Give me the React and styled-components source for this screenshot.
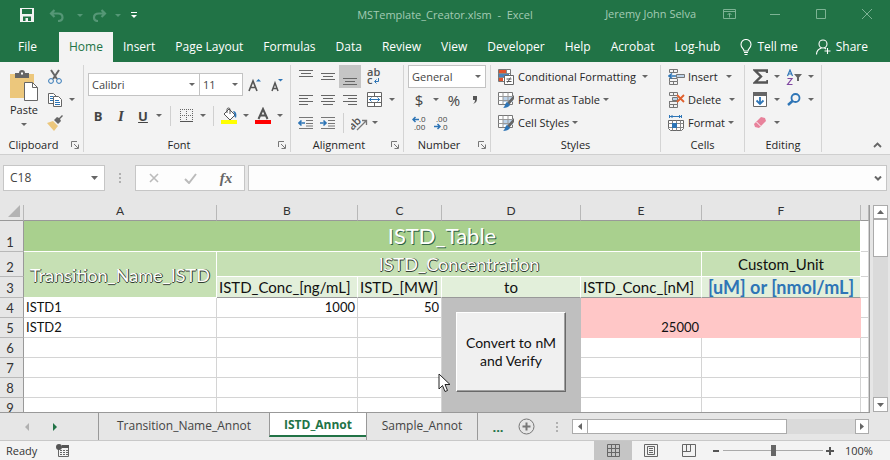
import React from "react";
import styled, { createGlobalStyle } from "styled-components";

const GlobalStyle = createGlobalStyle`
  * { box-sizing: border-box; }
  body { margin: 0; }
  button, input, select { font: inherit; color: inherit; margin: 0; }
`;

const UI = `"Open Sans", "Noto Sans", sans-serif`;
const CELL = `Lato, "Open Sans", sans-serif`;

const Window = styled.div`
  display: flex;
  flex-direction: column;
  height: 100vh;
  overflow: hidden;
  background: #e6e6e6;
  color: #262626;
  font-family: ${UI};
  font-size: 12px;
  line-height: 16px;
`;

/* ---------- shared ---------- */
const PlainButton = styled.button`
  display: inline-flex;
  align-items: center;
  justify-content: center;
  flex: none;
  width: ${(p) => (p.$w ? `${p.$w}px` : "auto")};
  height: ${(p) => (p.$h ? `${p.$h}px` : "auto")};
  padding: 0;
  border: 0;
  background: ${(p) => (p.$pressed ? "#c5c5c5" : "transparent")};
  white-space: nowrap;
`;

function Svg({ w = 16, h = 16, children, ...rest }) {
  return (
    <svg width={w} height={h} viewBox={`0 0 ${w} ${h}`} fill="none" aria-hidden="true" {...rest}>
      {children}
    </svg>
  );
}

const Caret = ({ color = "#666" }) => (
  <Svg w={6} h={3}><path d="M0 0h6L3 3z" fill={color} /></Svg>
);

function CaretButton({ label, w = 12, color }) {
  return <PlainButton $w={w} $h={20} aria-label={label}><Caret color={color} /></PlainButton>;
}

/* ---------- title bar ---------- */
const TitleBar = styled.header`
  display: grid;
  grid-template-columns: 1fr auto 1fr;
  align-items: center;
  flex: none;
  height: 32px;
  padding-bottom: 4px;
  background: #217346;
  color: #a3cbb4;
  font-size: 11px;
`;
const QuickAccess = styled.div`
  display: flex;
  align-items: center;
  padding: 2px 0 0 19px;
`;
const DocTitle = styled.h1`
  margin: 2px 0 0;
  font-size: 11px;
  font-weight: 400;
  white-space: pre;
`;
const WindowControls = styled.div`
  display: flex;
  align-items: center;
  justify-content: flex-end;
  min-width: 0;
`;
const UserName = styled.span`
  margin-right: 10px;
  white-space: nowrap;
`;

/* ---------- ribbon tabs ---------- */
const RibbonTabs = styled.nav`
  display: flex;
  flex: none;
  height: 30px;
  padding-right: 22px;
  background: #217346;
  color: #fff;
`;
const RibbonTab = styled.button`
  flex: none;
  height: 30px;
  padding: 0 10px;
  border: 0;
  background: ${(p) => (p.$active ? "#f3f3f3" : "transparent")};
  color: ${(p) => (p.$active ? "#217346" : "#fff")};
  font-size: 12px;
  white-space: nowrap;
  &:first-child { padding: 0 22px 0 18px; }
`;
const TabAction = styled.button`
  display: flex;
  align-items: center;
  gap: 5px;
  padding: 0;
  border: 0;
  margin-left: ${(p) => (p.$end ? "auto" : "10px")};
  background: transparent;
  color: #fff;
  white-space: nowrap;
`;

/* ---------- ribbon ---------- */
const Ribbon = styled.section`
  display: flex;
  flex: none;
  height: 93px;
  padding: 3px 0 2px;
  border-bottom: 1px solid #cfcfcf;
  background: #f3f3f3;
  font-size: 11px;
`;
const Group = styled.div`
  display: flex;
  flex-direction: column;
  flex: none;
  width: ${(p) => p.$w}px;
  padding: 0 4px;
  border-right: 1px solid #d4d4d4;
`;
const GroupBody = styled.div`
  display: flex;
  flex-direction: ${(p) => (p.$row ? "row" : "column")};
  flex: 1;
  min-height: 0;
  ${(p) => p.$spread && "padding: 8px 0 11px; justify-content: space-between;"}
`;
const GroupFooter = styled.div`
  display: flex;
  align-items: center;
  height: 14px;
  white-space: nowrap;
`;
const FooterLabel = styled.span`
  flex: 1;
  text-align: center;
`;
const Launcher = styled(PlainButton)`
  margin-left: 8px;
`;
const Line = styled.div`
  display: flex;
  align-items: center;
  height: 23px;
  flex: none;
`;
const Stack = styled.div`
  display: flex;
  flex-direction: column;
`;
const VRule = styled.span`
  flex: none;
  width: 1px;
  height: 20px;
  margin: 0 ${(p) => p.$m ?? 5}px;
  background: #d0d0d0;
`;
const PasteButton = styled.button`
  display: flex;
  flex-direction: column;
  align-items: center;
  width: 40px;
  padding: 5px 0 0;
  border: 0;
  background: transparent;
  gap: 1px;
  & > svg:last-child { margin-top: 4px; }
`;
const PickerBox = styled.label`
  position: relative;
  display: flex;
  flex: none;
  width: ${(p) => p.$w}px;
  height: 23px;
  border: 1px solid #c3c3c3;
  background: #fff;
  & + & { border-left: 0; }
  & > svg {
    position: absolute;
    right: 4px;
    top: 9px;
    pointer-events: none;
  }
`;
const Picker = styled.select`
  width: 100%;
  padding: 0 3px;
  border: 0;
  appearance: none;
  background: transparent;
  color: #444;
`;
const GlyphButton = styled(PlainButton)`
  color: #444;
  font-size: ${(p) => p.$size ?? 13}px;
  font-weight: ${(p) => (p.$bold ? 700 : 400)};
  font-style: ${(p) => (p.$italic ? "italic" : "normal")};
  font-family: ${(p) => (p.$italic ? `"Liberation Serif", serif` : UI)};
  text-decoration: ${(p) => (p.$underline ? "underline" : "none")};
`;
const LabelButton = styled.button`
  display: flex;
  align-items: center;
  gap: 3px;
  height: 23px;
  padding: 0 3px;
  border: 0;
  background: transparent;
  white-space: nowrap;
  & > svg:last-child { margin-left: ${(p) => p.$gap ?? 0}px; }
`;
const CollapseSlot = styled.div`
  display: flex;
  flex: 1;
  align-items: flex-end;
  justify-content: flex-end;
  padding: 0 7px 0 0;
`;

function RibbonGroup({ name, w, launcher, children, row, spread }) {
  return (
    <Group $w={w} role="group" aria-label={name}>
      <GroupBody $row={row} $spread={spread}>{children}</GroupBody>
      <GroupFooter>
        <FooterLabel>{name}</FooterLabel>
        {launcher && (
          <Launcher $w={8} $h={10} aria-label={`${name} settings`}>
            <Svg w={8} h={8}>
              <path d="M.5 6V.5H6M3 3l4 4M7.500 3.500v4h-4" stroke="#777" />
            </Svg>
          </Launcher>
        )}
      </GroupFooter>
    </Group>
  );
}

const Lines = ({ rows }) => (
  <Svg w={16} h={16}>
    {rows.map(([x, y, l]) => <path key={y} d={`M${x} ${y}.5h${l}`} stroke="#666" />)}
  </Svg>
);

const IndentIcon = ({ right }) => (
  <Svg>
    <path d="M1 2.500h14M8 5.500h7M8 8.500h7M1 13.500h14M8 11h7" stroke="#777" />
    <path d={right ? "M0 8h6M3.500 5.500L6 8l-2.500 2.500" : "M7 8H1M3.500 5.500L1 8l2.500 2.500"} stroke="#2e75b6" strokeWidth="1.600" />
  </Svg>
);

const TableIcon = ({ children, fill = "#bcd3ea" }) => (
  <Svg w={17}>
    <path d="M.5.5h14v12H.5z" fill="#fff" stroke="#777" />
    <path d="M5 4h10v6H5z" fill={fill} />
    <path d="M.5 4.500h14M.5 8.500h14M5 .5v12M10 .5v12" stroke="#999" />
    {children}
  </Svg>
);

const Brush = () => (
  <>
    <path d="M16 3v4l-5 6-2-2z" fill="#666" />
    <path d="M9 10l3 3c-1 2-4 3-7 3 2-1 2-5 4-6z" fill="#2e75b6" />
  </>
);

const CellsBase = () => (
  <path d="M1.500.5h8v3h-8zM5.500.5v3M1.500 12.500h8v3h-8zM5.500 12.500v3M1.500 9v3.500M9.500 10v2.500M1.500 9.500h8" stroke="#777" />
);

/* ---------- formula bar ---------- */
const FormulaBar = styled.section`
  display: flex;
  align-items: center;
  flex: none;
  height: 50px;
  padding: 0 3px 4px;
  font-size: 12px;
`;
const NameBox = styled.div`
  display: flex;
  align-items: center;
  width: 102px;
  height: 26px;
  border: 1px solid #c6c6c6;
  background: #fff;
`;
const BareInput = styled.input`
  flex: 1;
  min-width: 0;
  padding: 0 6px;
  border: 0;
  background: transparent;
  color: #444;
`;
const Grip = styled.span`
  display: flex;
  justify-content: center;
  width: 30px;
`;
const FormulaActions = styled.div`
  display: flex;
  align-items: center;
  justify-content: space-between;
  width: 110px;
  height: 26px;
  margin-right: 3px;
  padding: 0 11px;
  border: 1px solid #c6c6c6;
  background: #fdfdfd;
`;
const FormulaBox = styled.div`
  display: flex;
  align-items: center;
  flex: 1;
  height: 26px;
  padding-right: 3px;
  border: 1px solid #c6c6c6;
  background: #fdfdfd;
`;
const FxButton = styled(PlainButton)`
  color: #666;
  font: italic 700 15px "Liberation Serif", serif;
`;

/* ---------- sheet ---------- */
const SheetArea = styled.main`
  display: flex;
  flex: 1;
  min-height: 0;
`;
const SheetPane = styled.div`
  position: relative;
  flex: 1;
  min-width: 0;
  overflow: hidden;
  border-right: 1px solid #999;
  border-bottom: 1px solid #999;
  background: #fff;
`;
const Grid = styled.table`
  width: 100%;
  table-layout: fixed;
  border-collapse: separate;
  border-spacing: 0;
  color: #111;
  font-family: ${CELL};
  font-size: 13px;
  line-height: 15px;
`;
const Column = styled.col`
  width: ${(p) => (p.$w ? `${p.$w}px` : "auto")};
`;
const Row = styled.tr`
  height: ${(p) => p.$h ?? 20}px;
`;
const HeadCell = styled.th`
  padding: 0;
  border-right: 1px solid #b8b8b8;
  border-bottom: 1px solid #b8b8b8;
  background: #e6e6e6;
  color: #333;
  font-weight: 400;
  font-size: 13px;
  line-height: 14px;
  vertical-align: bottom;
  ${(p) => p.$row && "border-right-color: #999; padding-right: 3px; padding-bottom: 2px;"}
  ${(p) => p.$col && "border-bottom-color: #999; padding-bottom: 3px; font-size: 12px; line-height: 12px;"}
`;
const Corner = styled(HeadCell)`
  padding: 0;
  & > svg { display: block; margin: 0 3px 3px auto; }
`;
const fills = {
  title: "background: #a9d08e; border-color: #fff;",
  band: "background: #c6e0b4; border-color: #fff;",
  label: "background: #e2efda; border-right-color: #fff; border-bottom-color: #999;",
  pink: "background: #ffc7c7; border-color: #ffc7c7;",
  grey: "background: #bfbfbf; border-color: #bfbfbf;",
  none: "",
};
const Cell = styled.td`
  position: ${(p) => (p.$anchor ? "relative" : "static")};
  padding: 0 2px;
  border-right: 1px solid #d4d4d4;
  border-bottom: 1px solid #d4d4d4;
  text-align: ${(p) => p.$align ?? "left"};
  white-space: nowrap;
  ${(p) => fills[p.$fill ?? "none"]}
`;
const FieldName = styled.span`
  font-size: 15px;
  line-height: 18px;
`;
const SheetTitle = styled.span`
  color: #fff;
  font-size: 22px;
  line-height: 26px;
  text-shadow: 1px 1px 0 #2f5f45;
`;
const BandTitle = styled.span`
  color: #fff;
  font-size: 18px;
  line-height: 20px;
  text-shadow: 1px 0 0 #2f3a2f, 0 1px 0 #2f3a2f;
`;
const UnitNote = styled.strong`
  color: #2e75b6;
  font-size: 18px;
  line-height: 18px;
`;
const MacroButton = styled.button`
  position: absolute;
  z-index: 1;
  left: 14px;
  top: 14px;
  width: 110px;
  height: 80px;
  padding: 0;
  border: 1px solid;
  border-color: #fff #696969 #696969 #fff;
  box-shadow: inset -1px -1px 0 #a0a0a0;
  background: #f0f0f0;
  color: #111;
  font-size: 14px;
  line-height: 18px;
  white-space: normal;
`;
const Pointer = styled.div`
  position: absolute;
  z-index: 2;
  left: 438px;
  top: 168px;
`;
const VScroll = styled.div`
  display: flex;
  flex-direction: column;
  flex: none;
  width: 15px;
  margin: 0 2px 1px 3px;
  background: #dadada;
`;
const ScrollButton = styled(PlainButton)`
  border: 1px solid #ababab;
  background: #fff;
`;
const VThumb = styled.div`
  height: 38px;
  border: 1px solid #ababab;
  background: #fff;
`;
const Spacer = styled.div`
  flex: 1;
`;

/* ---------- sheet tabs ---------- */
const SheetTabs = styled.nav`
  display: flex;
  flex: none;
  height: 27px;
  padding-right: 21px;
  color: #444;
  font-size: 12px;
`;
const TabArrows = styled.div`
  display: flex;
  align-items: center;
  width: 98px;
  padding-left: 13px;
`;
const SheetTab = styled.button`
  flex: none;
  width: ${(p) => p.$w}px;
  height: ${(p) => (p.$active ? 24 : 27)}px;
  padding: ${(p) => (p.$active ? "2px 0 0" : "0 0 1px")};
  border: 0;
  border-left: 1px solid #999;
  border-bottom: ${(p) => (p.$active ? "2px solid #217346" : "0")};
  background: ${(p) => (p.$active ? "#fff" : "transparent")};
  color: ${(p) => (p.$active ? "#217346" : "#444")};
  font-weight: ${(p) => (p.$active ? 700 : 400)};
  white-space: nowrap;
`;
const TabsEnd = styled.div`
  display: flex;
  align-items: center;
  width: 95px;
  flex: none;
  border-left: 1px solid #999;
`;
const MoreTabs = styled(PlainButton)`
  color: #217346;
  font-weight: 700;
  font-size: 13px;
`;
const HScroll = styled.div`
  display: flex;
  flex: 1;
  height: 15px;
  margin-top: 6px;
  background: #dadada;
`;
const HThumb = styled.div`
  width: 67%;
  border: 1px solid #ababab;
  border-left: 0;
  background: #fff;
`;

/* ---------- status bar ---------- */
const StatusBar = styled.footer`
  display: flex;
  align-items: stretch;
  flex: none;
  height: 20px;
  padding: 0 18px 0 6px;
  border-top: 1px solid #c8c8c8;
  background: #f3f3f3;
  color: #333;
  font-size: 11px;
`;
const Status = styled.span`
  align-self: center;
  width: 50px;
`;
const ZoomControl = styled.div`
  display: flex;
  align-items: center;
  margin-left: 4px;
`;
const ZoomSlider = styled.input`
  appearance: none;
  width: 100px;
  height: 11px;
  margin: 0 3px;
  background: linear-gradient(#aaa, #aaa) center / 100% 1px no-repeat;
  &::-webkit-slider-thumb {
    appearance: none;
    width: 5px;
    height: 11px;
    border: 0;
    background: #666;
  }
`;
const ZoomValue = styled.output`
  width: 27px;
  margin-left: 11px;
`;

const ribbonTabs = ["File", "Home", "Insert", "Page Layout", "Formulas", "Data", "Review", "View", "Developer", "Help", "Acrobat", "Log-hub"];

function QuickAccessIcons() {
  const faded = "#559776";
  return (
    <QuickAccess>
      <PlainButton $w={16} $h={20} aria-label="Save">
        <Svg w={14} h={14}>
          <path d="M0 0h14v14H0z" fill="#f3f3f3" />
          <path d="M2 1h10v5H2zM3 8.500h8V13H8v-3H5.500v3H3z" fill="#217346" />
        </Svg>
      </PlainButton>
      <PlainButton $w={42} $h={20} aria-label="Undo">
        <Svg w={15} h={13}>
          <path d="M5.500 1L2 4.500 5.500 8M2 4.500h7c3 0 4.500 1.500 4.500 4s-2 3.500-4.500 3.500" stroke={faded} strokeWidth="2.200" />
        </Svg>
      </PlainButton>
      <Caret color={faded} />
      <PlainButton $w={32} $h={20} aria-label="Redo">
        <Svg w={15} h={13}>
          <path d="M9.500 1L13 4.500 9.500 8M13 4.500H7c-3 0-5 1.500-5 4S4 12 6 12" stroke={faded} strokeWidth="2.200" />
        </Svg>
      </PlainButton>
      <Caret color={faded} />
      <PlainButton $w={26} $h={20} aria-label="Customize toolbar">
        <Svg w={6} h={6}><path d="M0 .5h6" stroke="#fff" /><path d="M0 3h6L3 6z" fill="#fff" /></Svg>
      </PlainButton>
    </QuickAccess>
  );
}

function Header() {
  const c = "#7db394";
  return (
    <>
      <TitleBar>
        <QuickAccessIcons />
        <DocTitle>MSTemplate_Creator.xlsm  -  Excel</DocTitle>
        <WindowControls>
          <UserName>Jeremy John Selva</UserName>
          <PlainButton $w={46} $h={28} aria-label="Ribbon display options">
            <Svg w={13} h={10}><path d="M.5.5h12v9H.5zM.5 2.500h12M6.500 8.500v-4M4.500 6l2-2 2 2" stroke={c} /></Svg>
          </PlainButton>
          <PlainButton $w={46} $h={28} aria-label="Minimize">
            <Svg w={10} h={10}><path d="M0 5.500h10" stroke={c} /></Svg>
          </PlainButton>
          <PlainButton $w={46} $h={28} aria-label="Maximize">
            <Svg w={10} h={10}><path d="M.5.5h9v9h-9z" stroke={c} /></Svg>
          </PlainButton>
          <PlainButton $w={46} $h={28} aria-label="Close">
            <Svg w={10} h={10}><path d="M0 0l10 10M10 0L0 10" stroke={c} /></Svg>
          </PlainButton>
        </WindowControls>
      </TitleBar>
      <RibbonTabs>
        {ribbonTabs.map((t) => <RibbonTab key={t} $active={t === "Home"}>{t}</RibbonTab>)}
        <TabAction>
          <Svg w={12} h={17}>
            <path d="M4 12C4 9.500 1 9 1 5.500a5 5 0 0110 0C11 9 8 9.500 8 12zM4 13.500h4M4.500 15.500h3" stroke="#fff" strokeWidth="1.100" />
          </Svg>
          Tell me
        </TabAction>
        <TabAction $end>
          <Svg w={15} h={16}>
            <circle cx="7" cy="5" r="4" stroke="#fff" strokeWidth="1.100" />
            <path d="M.5 15.500c0-3 2-5.500 5-6.500M8.500 9l1.500 1M11.500 9v6M8.500 12h6" stroke="#fff" strokeWidth="1.100" />
          </Svg>
          Share
        </TabAction>
      </RibbonTabs>
    </>
  );
}

function ClipboardGroup() {
  return (
    <RibbonGroup name="Clipboard" w={84} launcher row>
      <PasteButton>
        <Svg w={28} h={31}>
          <path d="M0 4h24v24H0z" fill="#ecc77c" />
          <path d="M5 3h4a3 3 0 016 0h4v5H5z" fill="#666" />
          <path d="M11 2.500h2v2h-2z" fill="#fff" />
          <path d="M14.500 12.500h8l5 5v13h-13z" fill="#fff" stroke="#666" />
          <path d="M22.500 12.500v5h5" stroke="#666" />
        </Svg>
        Paste
        <Caret />
      </PasteButton>
      <Stack>
        <Line>
          <PlainButton $w={22} $h={22} aria-label="Cut">
            <Svg w={14} h={15}>
              <path d="M3 1l6 9M11 1L5 10" stroke="#666" strokeWidth="2" />
              <circle cx="3" cy="12" r="2.400" stroke="#2e75b6" /><circle cx="11" cy="12" r="2.400" stroke="#2e75b6" />
            </Svg>
          </PlainButton>
        </Line>
        <Line>
          <PlainButton $w={22} $h={22} aria-label="Copy">
            <Svg>
              <path d="M1.500 1.500h5l3 3v7h-8z" fill="#fff" stroke="#666" />
              <path d="M3 4.500h3M3 6.500h5M3 8.500h3" stroke="#2e75b6" />
              <path d="M6.500 4.500h5l3 3v7h-8z" fill="#fff" stroke="#666" />
              <path d="M8 8.500h4M8 10.500h5M8 12.500h5" stroke="#2e75b6" />
            </Svg>
          </PlainButton>
          <CaretButton label="Copy options" />
        </Line>
        <Line>
          <PlainButton $w={22} $h={22} aria-label="Format painter">
            <Svg>
              <path d="M12 3l3-3 1 1-3 3 1 2-3 3-4-4 3-3z" fill="#666" />
              <path d="M0 8l6-2 5 5-4 5z" fill="#ecc77c" />
            </Svg>
          </PlainButton>
        </Line>
      </Stack>
    </RibbonGroup>
  );
}

function FontGroup() {
  return (
    <RibbonGroup name="Font" w={207} launcher spread>
      <Line>
        <PickerBox $w={112}>
          <Picker aria-label="Font"><option>Calibri</option></Picker><Caret />
        </PickerBox>
        <PickerBox $w={43}>
          <Picker aria-label="Font size"><option>11</option></Picker><Caret />
        </PickerBox>
        <PlainButton $w={24} $h={22} aria-label="Increase font size">
          <Svg w={14} h={14}>
            <path d="M1 13L5 3l4 10M2.500 9.500h5" stroke="#555" strokeWidth="1.600" /><path d="M8 3.500h5L10.500 1z" fill="#2e75b6" />
          </Svg>
        </PlainButton>
        <PlainButton $w={20} $h={22} aria-label="Decrease font size">
          <Svg w={14} h={14}>
            <path d="M2 13L5 5l3 8M3 10.500h4" stroke="#555" strokeWidth="1.500" /><path d="M8 1h5l-2.500 2.500z" fill="#2e75b6" />
          </Svg>
        </PlainButton>
      </Line>
      <Line>
        <GlyphButton $w={20} $h={22} $bold aria-label="Bold">B</GlyphButton>
        <GlyphButton $w={26} $h={22} $bold $italic $size={15} aria-label="Italic">I</GlyphButton>
        <GlyphButton $w={18} $h={22} $bold $underline aria-label="Underline">U</GlyphButton>
        <CaretButton label="Underline options" w={14} />
        <VRule $m={4} />
        <PlainButton $w={22} $h={22} aria-label="Borders">
          <Svg w={13} h={13}>
            <path d="M.5 0v12M6.500 0v12M12.500 0v12M0 .5h13M0 6.500h13" stroke="#666" strokeDasharray="1 1" /><path d="M0 12.500h13" stroke="#555" />
          </Svg>
        </PlainButton>
        <CaretButton label="Border options" />
        <VRule $m={4} />
        <PlainButton $w={22} $h={22} aria-label="Fill color">
          <Svg w={17} h={17}>
            <path d="M8 2l6 6-5 5-6-6z" fill="#fff" stroke="#555" /><path d="M6 6V2.500a1.500 1.500 0 013 0V7" stroke="#555" />
            <path d="M12 4c3 0 4 3 3 7l-2-2 1-1z" fill="#2e75b6" /><path d="M0 13h16v4H0z" fill="#ff0" />
          </Svg>
        </PlainButton>
        <CaretButton label="Fill color options" />
        <PlainButton $w={22} $h={22} aria-label="Font color">
          <Svg w={16} h={17}>
            <path d="M3.500 12L8 2l4.500 10M5 8.500h6" stroke="#555" strokeWidth="2" /><path d="M0 13h16v4H0z" fill="#f00" />
          </Svg>
        </PlainButton>
        <CaretButton label="Font color options" />
      </Line>
    </RibbonGroup>
  );
}

function AlignmentGroup() {
  return (
    <RibbonGroup name="Alignment" w={113} launcher>
      <Line>
        <PlainButton $w={22} $h={23} aria-label="Align top"><Lines rows={[[1, 1, 14], [3, 4, 10], [1, 7, 14]]} /></PlainButton>
        <PlainButton $w={22} $h={23} aria-label="Align middle"><Lines rows={[[1, 4, 14], [3, 7, 10], [1, 10, 14]]} /></PlainButton>
        <PlainButton $w={22} $h={23} $pressed aria-label="Align bottom"><Lines rows={[[1, 9, 14], [3, 12, 10], [1, 15, 14]]} /></PlainButton>
        <PlainButton $w={26} $h={23} aria-label="Wrap text">
          <Svg w={14} h={17}>
            <text x="0" y="8" fontSize="11" fontWeight="600" fill="#555">ab</text>
            <text x="0" y="16" fontSize="11" fontWeight="600" fill="#555">c</text>
            <path d="M11.500 10v3.500H8M9.500 11.500l-2 2 2 2" stroke="#2e75b6" />
          </Svg>
        </PlainButton>
      </Line>
      <Line>
        <PlainButton $w={22} $h={23} aria-label="Align left"><Lines rows={[[1, 3, 14], [1, 6, 9], [1, 9, 14], [1, 12, 9]]} /></PlainButton>
        <PlainButton $w={22} $h={23} aria-label="Center"><Lines rows={[[1, 3, 14], [3, 6, 10], [1, 9, 14], [3, 12, 10]]} /></PlainButton>
        <PlainButton $w={22} $h={23} aria-label="Align right"><Lines rows={[[1, 3, 14], [6, 6, 9], [1, 9, 14], [6, 12, 9]]} /></PlainButton>
        <PlainButton $w={26} $h={23} aria-label="Merge and center">
          <Svg w={15} h={15}>
            <path d="M.5.5h14v14H.5zM.5 4.500h14M.5 10.500h14M7.500.5v4M7.500 10.500v4" fill="#fff" stroke="#666" />
            <path d="M2 7.500h11M4.500 5.500l-2 2 2 2M10.500 5.500l2 2-2 2" stroke="#2e75b6" />
          </Svg>
        </PlainButton>
        <CaretButton label="Merge options" w={10} />
      </Line>
      <Line>
        <PlainButton $w={22} $h={23} aria-label="Decrease indent"><IndentIcon /></PlainButton>
        <PlainButton $w={22} $h={23} aria-label="Increase indent"><IndentIcon right /></PlainButton>
        <VRule $m={4} />
        <PlainButton $w={22} $h={23} aria-label="Orientation">
          <Svg w={17} h={16}>
            <text x="-3" y="11" transform="rotate(-45 5 8)" fontSize="11" fontWeight="600" fill="#555">ab</text>
            <path d="M6 15L15 6M11 5.500h4.500V10" stroke="#777" strokeWidth="1.300" />
          </Svg>
        </PlainButton>
        <CaretButton label="Orientation options" w={10} />
      </Line>
    </RibbonGroup>
  );
}

function NumberGroup() {
  return (
    <RibbonGroup name="Number" w={87} launcher>
      <Line>
        <PickerBox $w={78}>
          <Picker aria-label="Number format"><option>General</option></Picker><Caret />
        </PickerBox>
      </Line>
      <Line>
        <GlyphButton $w={22} $h={22} $size={15} aria-label="Currency">$</GlyphButton>
        <CaretButton label="Currency options" />
        <GlyphButton $w={24} $h={22} $size={15} aria-label="Percent">%</GlyphButton>
        <PlainButton $w={18} $h={22} aria-label="Comma style">
          <Svg w={6} h={8}><path d="M1 0h4v3c0 2-1 4-4 5 1-1 2-2 2-4H1z" fill="#555" /></Svg>
        </PlainButton>
      </Line>
      <Line>
        <PlainButton $w={22} $h={22} aria-label="Increase decimal">
          <Svg w={15} h={14}>
            <path d="M7 3.500H1M3.500 1L1 3.500 3.500 6" stroke="#2e75b6" strokeWidth="1.500" />
            <text x="7" y="6" fontSize="8" fill="#444">.0</text><text x="2" y="14" fontSize="8" fill="#444">.00</text>
          </Svg>
        </PlainButton>
        <PlainButton $w={22} $h={22} aria-label="Decrease decimal">
          <Svg w={15} h={14}>
            <path d="M0 10.500h6M3.500 8L6 10.500 3.500 13" stroke="#2e75b6" strokeWidth="1.500" />
            <text x="2" y="6" fontSize="8" fill="#444">.00</text><text x="7" y="14" fontSize="8" fill="#444">.0</text>
          </Svg>
        </PlainButton>
      </Line>
    </RibbonGroup>
  );
}

function StylesGroup() {
  return (
    <RibbonGroup name="Styles" w={170}>
      <LabelButton $gap={3}>
        <Svg w={17}>
          <path d="M.5.5h12v12H.5z" fill="#fff" stroke="#777" />
          <path d="M1 1h7v3H1zM1 9h4v3H1z" fill="#e0522d" /><path d="M1 5h10v3H1z" fill="#4a82bd" />
          <path d="M.5 4.500h12M.5 8.500h12M8.500.5v4" stroke="#888" />
          <path d="M6.500 6.500h9v9h-9z" fill="#fff" stroke="#666" /><path d="M8.500 10h5M8.500 12.500h5M12.500 8.500l-3 5" stroke="#555" />
        </Svg>
        Conditional Formatting <Caret />
      </LabelButton>
      <LabelButton><TableIcon><Brush /></TableIcon>Format as Table <Caret /></LabelButton>
      <LabelButton><TableIcon><Brush /></TableIcon>Cell Styles <Caret /></LabelButton>
    </RibbonGroup>
  );
}

function CellsGroup() {
  return (
    <RibbonGroup name="Cells" w={84}>
      <LabelButton $gap={5}>
        <Svg w={17}><CellsBase /><path d="M8.500 5.500h8v3h-8z" fill="#bcd3ea" stroke="#777" /><path d="M8 7H1M4 4.500L1 7l3 2.500" stroke="#2e75b6" strokeWidth="1.500" /></Svg>
        Insert <Caret />
      </LabelButton>
      <LabelButton $gap={5}>
        <Svg w={17}><CellsBase /><path d="M4.500 5.500h5v3h-5z" fill="#bcd3ea" stroke="#777" /><path d="M9 3l7 7M16 3l-7 7" stroke="#e0602d" strokeWidth="1.800" /></Svg>
        Delete <Caret />
      </LabelButton>
      <LabelButton>
        <Svg w={17}>
          <path d="M2 1.500h12M1.500 0v3M13.500 0v3M4.500 0L3 1.500 4.500 3M11 0l1.500 1.500L11 3" stroke="#2e75b6" />
          <path d="M.5 5.500h15v8l-2 2h-11l-2-2z" fill="#fff" stroke="#666" /><path d="M.5 8.500h15M.5 12.500h15M4.500 5.500v10M8.500 5.500v10M12.500 5.500v10" stroke="#888" />
          <path d="M4 8h5v5H4z" fill="#2e75b6" />
        </Svg>
        Format <Caret />
      </LabelButton>
    </RibbonGroup>
  );
}

function EditingGroup() {
  return (
    <RibbonGroup name="Editing" w={77}>
      <Line>
        <PlainButton $w={22} $h={22} aria-label="AutoSum">
          <Svg w={15} h={15}><path d="M14 4V1.500H2L8 7.500 2 13.500h12.500V11" stroke="#555" strokeWidth="2.400" /></Svg>
        </PlainButton>
        <CaretButton label="AutoSum options" />
        <PlainButton $w={22} $h={22} aria-label="Sort and filter">
          <Svg>
            <path d="M1.500 7l2.500-6 2.500 6M2.500 5h3" stroke="#2e75b6" strokeWidth="1.200" />
            <path d="M1.500 9.500H6l-4.500 6h5" stroke="#8046a0" strokeWidth="1.200" /><path d="M8 5h8l-3 3.500V12h-2V8.500z" fill="#666" />
          </Svg>
        </PlainButton>
        <CaretButton label="Sort options" />
      </Line>
      <Line>
        <PlainButton $w={22} $h={22} aria-label="Fill">
          <Svg w={14} h={15}>
            <path d="M.5.5h13v14H.5z" fill="#fff" stroke="#666" /><path d="M0 0h14v4H0z" fill="#666" />
            <path d="M7 5v7M3.500 8.500L7 12l3.500-3.500" stroke="#2e75b6" strokeWidth="1.800" />
          </Svg>
        </PlainButton>
        <CaretButton label="Fill options" />
        <PlainButton $w={22} $h={22} aria-label="Find and select">
          <Svg w={14} h={13}><circle cx="8.500" cy="5" r="4" stroke="#2e75b6" strokeWidth="1.800" /><path d="M5.500 8L1 12" stroke="#2e75b6" strokeWidth="2.500" /></Svg>
        </PlainButton>
        <CaretButton label="Find options" />
      </Line>
      <Line>
        <PlainButton $w={22} $h={22} aria-label="Clear">
          <Svg w={14} h={13}><path d="M1 8l7-7 4 1 1 3-7 7-4-1z" fill="#e8829b" /><path d="M3.500 6l4 4" stroke="#fff" /></Svg>
        </PlainButton>
        <CaretButton label="Clear options" />
      </Line>
    </RibbonGroup>
  );
}

const Dots = () => (
  <Svg w={2} h={10}><path d="M0 0h2v2H0zM0 4h2v2H0zM0 8h2v2H0z" fill="#b0b0b0" /></Svg>
);

function Formula() {
  return (
    <FormulaBar>
      <NameBox>
        <BareInput aria-label="Name box" defaultValue="C18" />
        <PlainButton $w={20} $h={22} aria-label="Names"><Svg w={7} h={4}><path d="M0 0h7L3.500 4z" fill="#666" /></Svg></PlainButton>
      </NameBox>
      <Grip><Dots /></Grip>
      <FormulaActions>
        <PlainButton $w={14} $h={20} aria-label="Cancel"><Svg w={10} h={10}><path d="M1 1l8 8M9 1L1 9" stroke="#bbb" strokeWidth="1.600" /></Svg></PlainButton>
        <PlainButton $w={14} $h={20} aria-label="Enter"><Svg w={13} h={11}><path d="M1 6l4 4 7-9" stroke="#bbb" strokeWidth="2" /></Svg></PlainButton>
        <FxButton $w={14} $h={20} aria-label="Insert function">fx</FxButton>
      </FormulaActions>
      <FormulaBox>
        <BareInput aria-label="Formula" />
        <PlainButton $w={10} $h={20} aria-label="Expand formula bar"><Svg w={8} h={5}><path d="M1 .5l3 3 3-3" stroke="#666" strokeWidth="2" /></Svg></PlainButton>
      </FormulaBox>
    </FormulaBar>
  );
}

const bodyRows = [4, 5, 6, 7, 8, 9];
const values = { A4: "ISTD1", B4: "1000", C4: "50", A5: "ISTD2", E5: "25000" };

function bodyFill(col, row) {
  if (col === "D") return "grey";
  if ((col === "E" || col === "F") && row < 6) return "pink";
  return "none";
}

function Sheet() {
  return (
    <SheetArea>
      <SheetPane>
        <Grid>
          <colgroup>
            {[24, 193, 141, 84, 139, 121, 159].map((w, i) => <Column key={i} $w={w} />)}
            <Column />
          </colgroup>
          <thead>
            <Row $h={16}>
              <Corner $col><Svg w={12} h={12}><path d="M12 0v12H0z" fill="#b3b3b3" /></Svg></Corner>
              {["A", "B", "C", "D", "E", "F", ""].map((c) => <HeadCell key={c} $col scope="col">{c}</HeadCell>)}
            </Row>
          </thead>
          <tbody>
            <Row $h={31}>
              <HeadCell $row scope="row">1</HeadCell>
              <Cell colSpan={6} $fill="title" $align="center"><SheetTitle>ISTD_Table</SheetTitle></Cell>
              <Cell />
            </Row>
            <Row $h={25}>
              <HeadCell $row scope="row">2</HeadCell>
              <Cell rowSpan={2} $fill="band" $align="center"><BandTitle>Transition_Name_ISTD</BandTitle></Cell>
              <Cell colSpan={4} $fill="band" $align="center"><BandTitle>ISTD_Concentration</BandTitle></Cell>
              <Cell $fill="band" $align="center"><FieldName>Custom_Unit</FieldName></Cell>
              <Cell />
            </Row>
            <Row $h={21}>
              <HeadCell $row scope="row">3</HeadCell>
              <Cell $fill="label"><FieldName>ISTD_Conc_[ng/mL]</FieldName></Cell>
              <Cell $fill="label"><FieldName>ISTD_[MW]</FieldName></Cell>
              <Cell $fill="label" $align="center"><FieldName>to</FieldName></Cell>
              <Cell $fill="label"><FieldName>ISTD_Conc_[nM]</FieldName></Cell>
              <Cell $fill="label" $align="center"><UnitNote>[uM] or [nmol/mL]</UnitNote></Cell>
              <Cell />
            </Row>
            {bodyRows.map((r) => (
              <Row key={r}>
                <HeadCell $row scope="row">{r}</HeadCell>
                {["A", "B", "C", "D", "E", "F", "G"].map((c) => (
                  <Cell key={c} $fill={bodyFill(c, r)} $align={c === "A" ? "left" : "right"} $anchor={c + r === "D4"}>
                    {values[c + r]}
                    {c + r === "D4" && <MacroButton>Convert to nM<br />and Verify</MacroButton>}
                  </Cell>
                ))}
              </Row>
            ))}
          </tbody>
        </Grid>
        <Pointer>
          <Svg w={13} h={20}><path d="M1 1v15l3.500-3.500L7 18.500l2.500-1L7 11.500h5z" fill="#fff" stroke="#222" /></Svg>
        </Pointer>
      </SheetPane>
      <VScroll>
        <ScrollButton $w={15} $h={14} aria-label="Scroll up"><Svg w={7} h={4}><path d="M0 4h7L3.500 0z" fill="#666" /></Svg></ScrollButton>
        <VThumb />
        <Spacer />
        <ScrollButton $w={15} $h={15} aria-label="Scroll down"><Svg w={7} h={4}><path d="M0 0h7L3.500 4z" fill="#666" /></Svg></ScrollButton>
      </VScroll>
    </SheetArea>
  );
}

function Footer() {
  return (
    <>
      <SheetTabs>
        <TabArrows>
          <PlainButton $w={28} $h={20} aria-label="Previous sheet"><Svg w={4} h={8}><path d="M4 0v8L0 4z" fill="#b0b0b0" /></Svg></PlainButton>
          <PlainButton $w={28} $h={20} aria-label="Next sheet"><Svg w={4} h={8}><path d="M0 0v8l4-4z" fill="#217346" /></Svg></PlainButton>
        </TabArrows>
        <SheetTab $w={171}>Transition_Name_Annot</SheetTab>
        <SheetTab $w={97} $active>ISTD_Annot</SheetTab>
        <SheetTab $w={111}>Sample_Annot</SheetTab>
        <TabsEnd>
          <MoreTabs $w={40} $h={20} aria-label="More sheets">...</MoreTabs>
          <PlainButton $w={17} $h={20} aria-label="New sheet">
            <Svg w={17} h={17}><circle cx="8.500" cy="8.500" r="7.500" stroke="#777" /><path d="M8.500 4.500v8M4.500 8.500h8" stroke="#777" strokeWidth="2" /></Svg>
          </PlainButton>
          <Spacer />
          <Grip><Dots /></Grip>
        </TabsEnd>
        <HScroll>
          <ScrollButton $w={16} $h={15} aria-label="Scroll left"><Svg w={4} h={7}><path d="M4 0v7L0 3.500z" fill="#666" /></Svg></ScrollButton>
          <HThumb />
          <Spacer />
          <ScrollButton $w={14} $h={15} aria-label="Scroll right"><Svg w={4} h={7}><path d="M0 0v7l4-3.500z" fill="#666" /></Svg></ScrollButton>
        </HScroll>
      </SheetTabs>
      <StatusBar>
        <Status>Ready</Status>
        <PlainButton $w={13} aria-label="Record macro">
          <Svg w={13} h={13}>
            <path d="M2.500 4v8.500h10v-11H6" stroke="#666" /><path d="M6 1h7v3H6z" fill="#555" /><circle cx="3" cy="3" r="3" fill="#555" />
            <path d="M4 6.500h8M4 8.500h8M4 10.500h8" stroke="#666" strokeDasharray="2 1" />
          </Svg>
        </PlainButton>
        <Spacer />
        <PlainButton $w={38} $pressed aria-label="Normal view">
          <Svg w={13} h={13}><path d="M.5.5h12v12H.5zM4.500.5v12M8.500.5v12M.5 4.500h12M.5 8.500h12" stroke="#666" /></Svg>
        </PlainButton>
        <PlainButton $w={38} aria-label="Page layout view">
          <Svg w={14} h={13}><path d="M.5.5h13v12H.5zM3.500 2.500h7v8h-7zM5 4.500h4M5 6.500h4M5 8.500h4" stroke="#666" /></Svg>
        </PlainButton>
        <PlainButton $w={38} aria-label="Page break view">
          <Svg w={14} h={13}><path d="M.5.5h13v12H.5zM4.500.5v7M8.500.5v7M.5 7.500h8" stroke="#666" /></Svg>
        </PlainButton>
        <ZoomControl>
          <PlainButton $w={8} $h={18} aria-label="Zoom out"><Svg w={6} h={8}><path d="M0 4h6" stroke="#555" strokeWidth="2" /></Svg></PlainButton>
          <ZoomSlider type="range" aria-label="Zoom" min="10" max="190" defaultValue="100" />
          <PlainButton $w={8} $h={18} aria-label="Zoom in"><Svg w={8} h={8}><path d="M0 4h8M4 0v8" stroke="#555" strokeWidth="2" /></Svg></PlainButton>
          <ZoomValue>100%</ZoomValue>
        </ZoomControl>
      </StatusBar>
    </>
  );
}

export default function App() {
  return (
    <Window>
      <GlobalStyle />
      <Header />
      <Ribbon>
        <ClipboardGroup />
        <FontGroup />
        <AlignmentGroup />
        <NumberGroup />
        <StylesGroup />
        <CellsGroup />
        <EditingGroup />
        <CollapseSlot>
          <PlainButton $w={12} $h={14} aria-label="Collapse ribbon"><Svg w={9} h={6}><path d="M1 5l3.500-3.500L8 5" stroke="#666" strokeWidth="1.800" /></Svg></PlainButton>
        </CollapseSlot>
      </Ribbon>
      <Formula />
      <Sheet />
      <Footer />
    </Window>
  );
}
